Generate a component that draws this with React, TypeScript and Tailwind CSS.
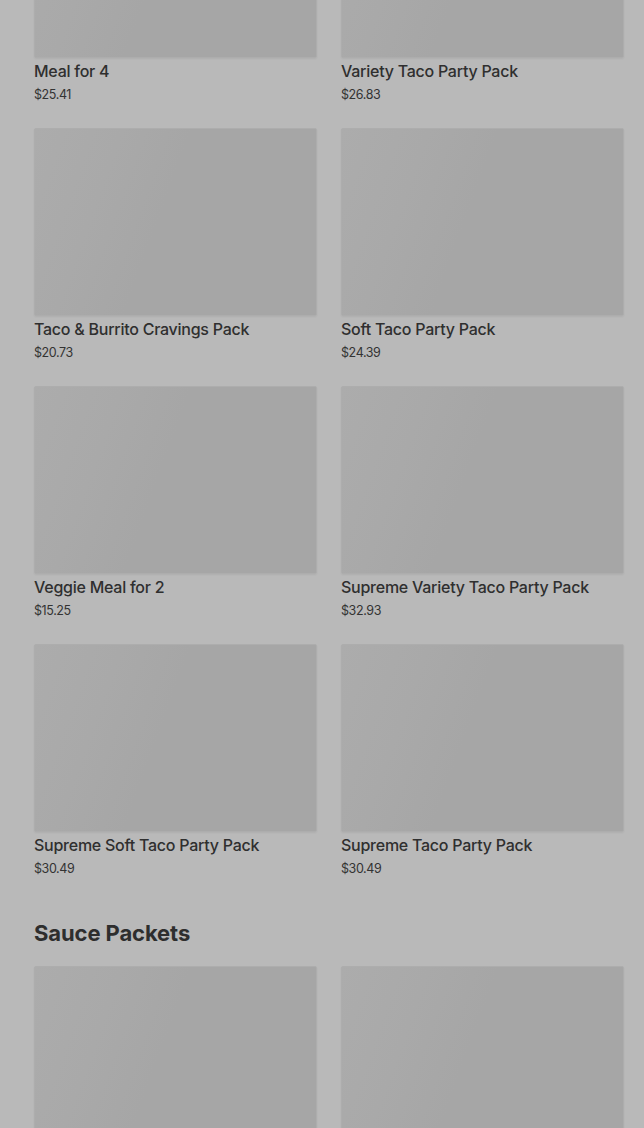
import React from "react";

type Item = { name: string; price: string };

const combos: Item[] = [
  { name: "Meal for 4", price: "$25.41" },
  { name: "Variety Taco Party Pack", price: "$26.83" },
  { name: "Taco & Burrito Cravings Pack", price: "$20.73" },
  { name: "Soft Taco Party Pack", price: "$24.39" },
  { name: "Veggie Meal for 2", price: "$15.25" },
  { name: "Supreme Variety Taco Party Pack", price: "$32.93" },
  { name: "Supreme Soft Taco Party Pack", price: "$30.49" },
  { name: "Supreme Taco Party Pack", price: "$30.49" },
];

function Thumb() {
  return (
    <div className="h-[188px] w-full rounded-[2px] border border-[#adadad] bg-[linear-gradient(110deg,#acacac_0%,#a9a9a9_25%,#a6a6a6_45%,#a6a6a6_100%)] shadow-[0_1px_2px_rgba(0,0,0,0.06)]" />
  );
}

function Card({ item }: { item: Item }) {
  return (
    <div className="flex flex-col mb-[23px]">
      <Thumb />
      <div className="mt-[1px] text-[16px] leading-[24px] font-medium text-[#2f2f2f] tracking-[-0.25px]">
        {item.name}
      </div>
      <div className="mt-[2px] text-[12.5px] leading-[20px] text-[#333333] tracking-[-0.4px]">
        {item.price}
      </div>
    </div>
  );
}

export default function App() {
  return (
    <div
      className="h-[1128px] w-full overflow-hidden bg-[#b9b9b9]"
      style={{ fontFamily: "Inter, 'Noto Sans', sans-serif" }}
    >
      <div className="pl-[34px] pr-[20px] -mt-[130px]">
        <div className="grid grid-cols-2 gap-x-6">
          {combos.map((c, i) => (
            <Card key={i} item={c} />
          ))}
        </div>
        <h2 className="mt-[17px] mb-[19px] text-[22px] leading-[28px] font-bold text-[#2e2e2e] tracking-[-0.1px]">
          Sauce Packets
        </h2>
        <div className="grid grid-cols-2 gap-x-6">
          <Thumb />
          <Thumb />
        </div>
      </div>
    </div>
  );
}
